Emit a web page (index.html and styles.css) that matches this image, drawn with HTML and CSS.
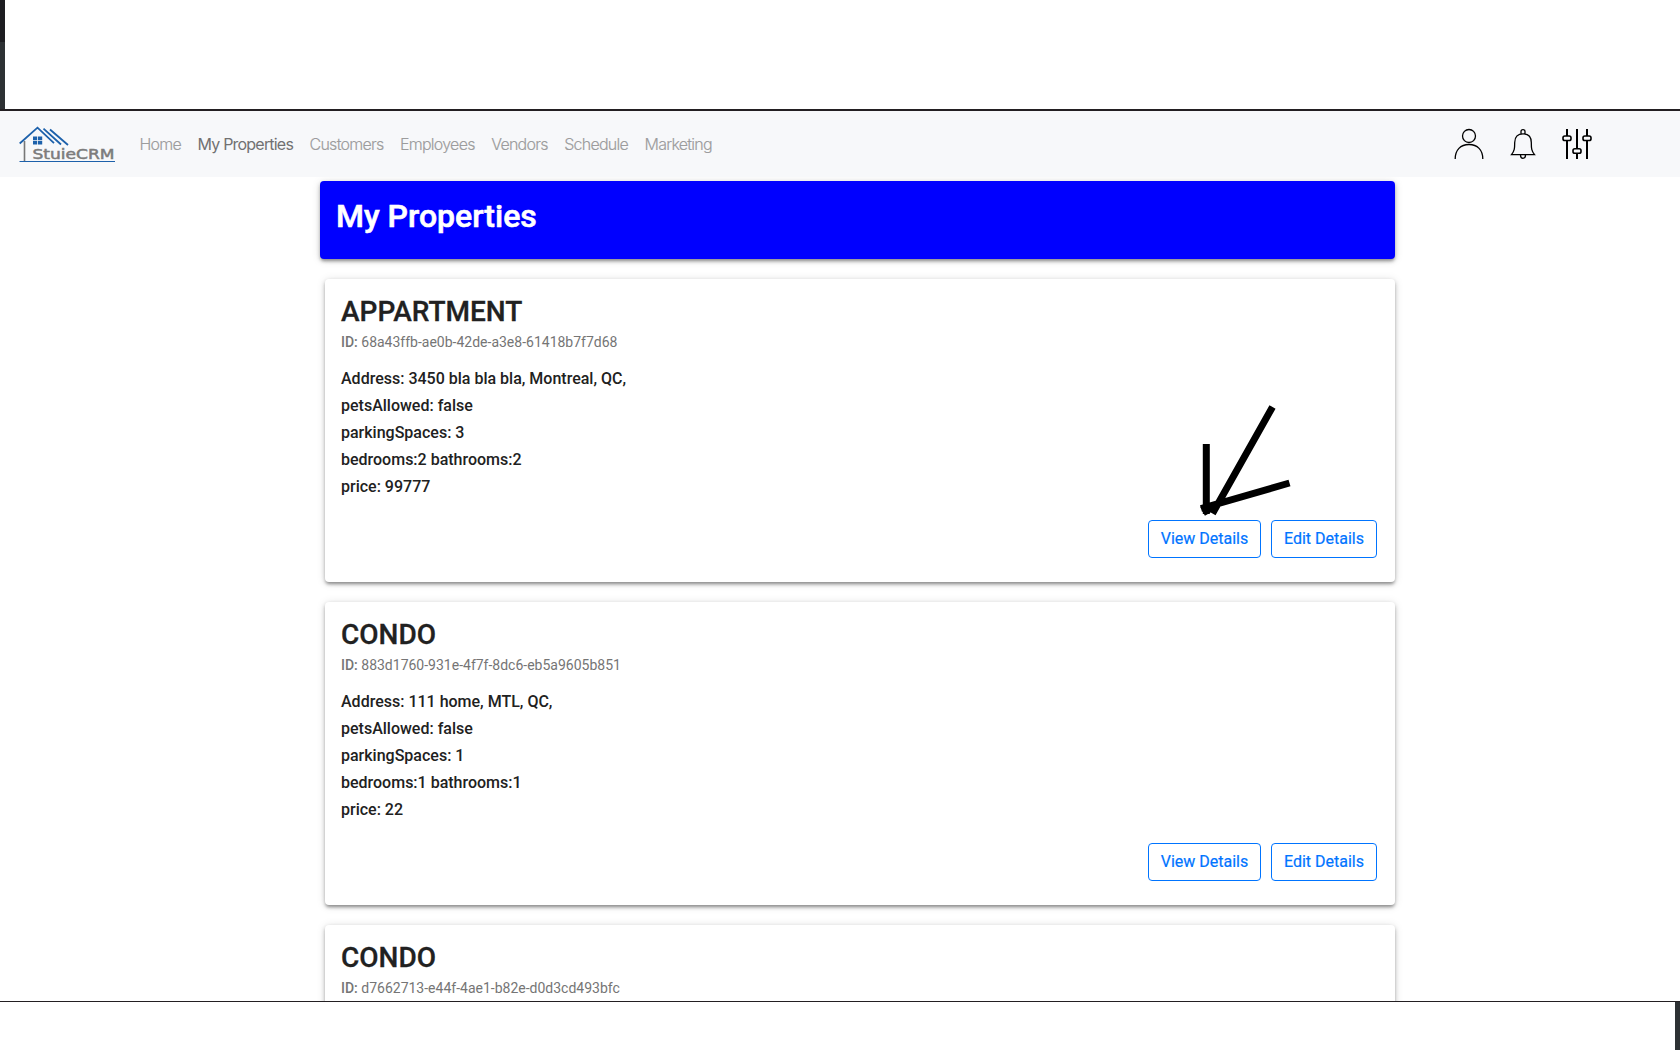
FILE: index.html
```html
<!DOCTYPE html>
<html lang="en">
<head>
<meta charset="utf-8">
<title>StuieCRM - My Properties</title>
<link rel="stylesheet" href="styles.css">
</head>
<body>
<div class="top-strip"></div>
<nav class="navbar">
  <svg class="logo" width="96" height="36" viewBox="0 0 96 36">
    <path d="M5.500 15V35" stroke="#777" stroke-width="1.600" fill="none"/>
    <path d="M.7 17.500 18.500 1.600 35 17.200M24.500 2.600 42 18.500M31 3.500 49 19" stroke="#1d61ab" stroke-width="1.800" fill="none"/>
    <path d="M14 10.500h4.200v3.700H14zM19 10.500h4.200v3.700H19zM14 15h4.200v3.500H14zM19 15h4.200v3.500H19z" fill="#1d61ab"/>
    <text x="13.500" y="32.500" textLength="82" lengthAdjust="spacingAndGlyphs" class="logo-text">StuieCRM</text>
    <path d="M.5 35.500H96" stroke="#1d61ab" stroke-width="1.200"/>
  </svg>
  <ul class="links">
    <li>Home</li>
    <li class="active">My Properties</li>
    <li>Customers</li>
    <li>Employees</li>
    <li>Vendors</li>
    <li>Schedule</li>
    <li>Marketing</li>
  </ul>
  <div class="tools">
    <svg width="30" height="32" viewBox="0 0 30 32" fill="none" stroke="#000" stroke-width="1.300"><circle cx="15" cy="8" r="6.500"/><path d="M1.200 31C1.200 22 6.500 16.500 15 16.500S28.800 22 28.800 31"/></svg>
    <svg width="26" height="32" viewBox="0 0 26 32" fill="none" stroke="#000" stroke-width="1.300"><path d="M11 5.500V3.500Q11 1.600 13 1.600T15 3.500V5.500M1.500 26.700C4.500 23 4.700 20.500 4.700 14.500 4.700 8.500 8 5.800 13 5.800S21.300 8.500 21.300 14.500C21.300 20.500 21.500 23 24.500 26.700ZM10.500 27Q10.500 30.300 13 30.300T15.500 27"/></svg>
    <svg width="30" height="32" viewBox="0 0 30 32" fill="#f7f8fa" stroke="#000" stroke-width="2"><path d="M5 1V31M15 1V31M25 1V31"/><g stroke-width="1.600"><rect x="1" y="8" width="8" height="4.500" rx="1.800"/><rect x="11" y="20.700" width="8" height="4.500" rx="1.800"/><rect x="21" y="8" width="8" height="4.500" rx="1.800"/></g></svg>
  </div>
</nav>
<main class="content">
  <header class="banner"><h1>My Properties</h1></header>
  <section class="card">
    <h2>APPARTMENT</h2>
    <p class="ident"><b>ID:</b> 68a43ffb-ae0b-42de-a3e8-61418b7f7d68</p>
    <div class="facts"><p>Address: 3450 bla bla bla, Montreal, QC,</p><p>petsAllowed: false</p><p>parkingSpaces: 3</p><p>bedrooms:2 bathrooms:2</p><p>price: 99777</p></div>
    <div class="actions"><button class="view">View Details</button><button>Edit Details</button></div>
    <svg class="arrow" width="92" height="112" viewBox="0 0 92 112" stroke="#000" stroke-width="7" fill="none"><path d="M72.500 2 12.500 108.500M6.300 39V109M1 103.500 89.500 78M3 100 8 109M6 104 14 104"/></svg>
  </section>
  <section class="card">
    <h2>CONDO</h2>
    <p class="ident"><b>ID:</b> 883d1760-931e-4f7f-8dc6-eb5a9605b851</p>
    <div class="facts"><p>Address: 111 home, MTL, QC,</p><p>petsAllowed: false</p><p>parkingSpaces: 1</p><p>bedrooms:1 bathrooms:1</p><p>price: 22</p></div>
    <div class="actions"><button class="view">View Details</button><button>Edit Details</button></div>
  </section>
  <section class="card">
    <h2>CONDO</h2>
    <p class="ident"><b>ID:</b> d7662713-e44f-4ae1-b82e-d0d3cd493bfc</p>
  </section>
</main>
<footer class="bottom-strip"></footer>
</body>
</html>
```
FILE: styles.css
```css
* { box-sizing: border-box; }
body {
  margin: 0;
  height: 1050px;
  display: flex;
  flex-direction: column;
  overflow: hidden;
  background: #fff;
  color: #212121;
  font-family: Roboto, sans-serif;
}
h1, h2, p, ul { margin: 0; padding: 0; }
.top-strip {
  flex: none;
  height: 111px;
  border-bottom: 2px solid #231f22;
  background: linear-gradient(#1d1d21 42px, #2d3134 42px) left / 5px 100% no-repeat;
}
.navbar {
  flex: none;
  display: flex;
  align-items: center;
  height: 66px;
  padding: 0 88px 0 19px;
  background: #f7f8fa;
}
.logo-text {
  font: 400 14px "DejaVu Sans", sans-serif;
  fill: #7c7c7c;
  stroke: #7c7c7c;
  stroke-width: .5px;
}
.links {
  display: flex;
  gap: 16.5px;
  margin-left: 24.5px;
  list-style: none;
  font: 300 16px/24px Inter, sans-serif;
  letter-spacing: -0.75px;
  color: #9c9c9d;
  -webkit-text-stroke: .15px;
}
.links .active { color: #717172; letter-spacing: -0.8px; font-weight: 400; -webkit-text-stroke: 0; }
.tools {
  display: flex;
  gap: 26px;
  margin-left: auto;
}
.content {
  height: 824px;
  width: 1115px;
  margin-left: 300px;
  padding: 4px 20px 0;
  overflow: hidden;
}
.banner, .card {
  border-radius: 4px;
  box-shadow: 0 3px 3px -1px rgba(0,0,0,.25), 0 2px 4px rgba(0,0,0,.22), 0 1px 10px rgba(0,0,0,.12);
}
.banner {
  height: 78px;
  padding: 16px;
  background: #00f;
  color: #fff;
}
h1 { font-size: 32px; line-height: 38px; font-weight: 500; -webkit-text-stroke: .6px; }
.card {
  position: relative;
  height: 303px;
  margin: 20px 0 0 5px;
  padding: 17px 16px 16px;
  background: #fff;
}
h2 { font-size: 28px; line-height: 32px; font-weight: 500; -webkit-text-stroke: .3px; }
.ident { margin-top: 4px; font-size: 14px; line-height: 20px; color: #757575; }
.ident b { font-weight: 500; }
.facts { margin-top: 13px; font-size: 16px; line-height: 27px; font-weight: 500; }
.actions {
  display: flex;
  justify-content: flex-end;
  gap: 10px;
  margin: 20px 2px 0;
}
button {
  width: 106px;
  height: 38px;
  padding: 0;
  border: 1px solid #0074ff;
  border-radius: 4px;
  background: #fff;
  color: #0074ff;
  font: 400 16px/24px Roboto, sans-serif;
  -webkit-text-stroke: .2px;
}
.view { width: 113px; }
.arrow { position: absolute; left: 875px; top: 126px; }
.bottom-strip {
  flex: none;
  height: 49px;
  border-top: 1px solid #231f22;
  background: linear-gradient(#2d3134, #2d3134) right / 5px 100% no-repeat;
}
```
